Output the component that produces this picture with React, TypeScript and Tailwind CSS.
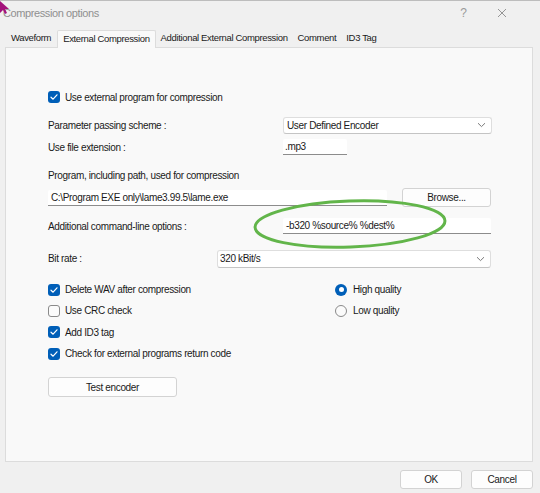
import React from "react";

const F = "font-['Liberation_Sans',Arial,sans-serif]";

function Check({ checked, label }: { checked: boolean; label: string }) {
  return (
    <div className="flex items-center h-[21.3px]">
      {checked ? (
        <div className="w-[12px] h-[12px] rounded-[3px] bg-[#005fb8] flex items-center justify-center">
          <svg width="8" height="8" viewBox="0 0 8 8">
            <path d="M1 4.2 L3.1 6.2 L7 1.8" fill="none" stroke="white" strokeWidth="1.2" strokeLinecap="round" strokeLinejoin="round" />
          </svg>
        </div>
      ) : (
        <div className="w-[12px] h-[12px] rounded-[3px] border border-[#8a8a8a] bg-[#fbfbfb]" />
      )}
      <span className="ml-[5px] text-[10px] tracking-[-0.35px] text-[#1a1a1a]">{label}</span>
    </div>
  );
}

function Radio({ checked, label }: { checked: boolean; label: string }) {
  return (
    <div className="flex items-center h-[21.3px]">
      {checked ? (
        <div className="w-[12px] h-[12px] rounded-full bg-[#005fb8] flex items-center justify-center">
          <div className="w-[5px] h-[5px] rounded-full bg-white" />
        </div>
      ) : (
        <div className="w-[12px] h-[12px] rounded-full border border-[#8a8a8a] bg-[#fbfbfb]" />
      )}
      <span className="ml-[6px] text-[10px] tracking-[-0.35px] text-[#1a1a1a]">{label}</span>
    </div>
  );
}

function Chevron() {
  return (
    <svg width="9" height="6" viewBox="0 0 9 6">
      <path d="M1 1.2 L4.5 4.6 L8 1.2" fill="none" stroke="#7a7a7a" strokeWidth="1" />
    </svg>
  );
}

export default function App() {
  return (
    <div className={`relative w-[540px] h-[493px] bg-[#f0f0f0] overflow-hidden border-t border-[#bdbdbd] ${F}`}>
      {/* cursor */}
      <svg className="absolute left-0 top-0" width="10" height="14" viewBox="0 0 10 14">
        <polygon points="0,0 0,12 3,9 5,13 7,12 5,8 9,8" fill="#a3127c" />
      </svg>

      {/* title bar */}
      <div className="h-[24px] flex items-center pl-[3px] pr-[33px]">
        <span className="text-[11px] tracking-[-0.4px] text-[#8f8f8f]">Compression options</span>
        <div className="flex-1" />
        <span className="text-[12px] text-[#9a9a9a] mr-[30px]">?</span>
        <svg width="10" height="10" viewBox="0 0 10 10">
          <path d="M1 1 L9 9 M9 1 L1 9" stroke="#8a8a8a" strokeWidth="0.9" />
        </svg>
      </div>

      {/* tabs */}
      <div className="flex items-end h-[22px] pl-[5px] text-[9.5px] tracking-[-0.35px] text-[#1a1a1a]">
        <div className="h-[17px] px-[6px] flex items-center">Waveform</div>
        <div className="h-[18px] px-[5px] flex items-center bg-[#f9f9f9] border border-b-0 border-[#dcdcdc] rounded-t-[2px] relative top-[1px] z-10">
          External Compression
        </div>
        <div className="h-[17px] px-[5px] flex items-center">Additional External Compression</div>
        <div className="h-[17px] px-[5px] flex items-center">Comment</div>
        <div className="h-[17px] px-[5px] flex items-center">ID3 Tag</div>
      </div>

      {/* panel */}
      <div className="relative ml-[5px] w-[528px] h-[415px] bg-[#f9f9f9] border border-[#dcdcdc] pl-[42px] pt-[42px] text-[10px] tracking-[-0.35px] text-[#1a1a1a]">
        <div className="h-[16px] flex items-center -mt-[1px]">
          <Check checked label="Use external program for compression" />
        </div>

        <div className="mt-[12px] h-[16px] flex items-center">
          <div className="w-[235px]">Parameter passing scheme :</div>
          <div className="w-[209px] h-[17px] bg-white border border-[#dedede] border-b-[#c4c4c4] rounded-[3px] flex items-center pl-[3px] pr-[5px]">
            <span className="flex-1">User Defined Encoder</span>
            <Chevron />
          </div>
        </div>

        <div className="mt-[6px] h-[16px] flex items-center">
          <div className="w-[235px]">Use file extension :</div>
          <div className="w-[64px] h-[16px] bg-white border-b border-[#8c8c8c] rounded-t-[2px] flex items-center pl-[2px]">.mp3</div>
        </div>

        <div className="mt-[13px] h-[14px] flex items-center">Program, including path, used for compression</div>

        <div className="mt-[6px] h-[19px] flex items-center">
          <div className="w-[339px] h-[16px] bg-white border-b border-[#8c8c8c] rounded-t-[2px] flex items-center pl-[3px]">
            C:\Program EXE only\lame3.99.5\lame.exe
          </div>
          <div className="ml-[15px] w-[89px] h-[19px] bg-[#fdfdfd] border border-[#d3d3d3] rounded-[3px] flex items-center justify-center">
            Browse...
          </div>
        </div>

        <div className="mt-[11px] h-[16px] flex items-center">
          <div className="w-[235px]">Additional command-line options :</div>
          <div className="w-[208px] h-[16px] bg-white border-b border-[#8c8c8c] rounded-t-[2px] flex items-center pl-[3px]">
            -b320 %source% %dest%
          </div>
        </div>

        <div className="mt-[16px] h-[17px] flex items-center">
          <div className="w-[169px]">Bit rate :</div>
          <div className="w-[274px] h-[18px] bg-white border border-[#dedede] border-b-[#c4c4c4] rounded-[3px] flex items-center pl-[2px] pr-[5px]">
            <span className="flex-1">320 kBit/s</span>
            <Chevron />
          </div>
        </div>

        <div className="mt-[12px] flex">
          <div className="w-[287px]">
            <Check checked label="Delete WAV after compression" />
            <Check checked={false} label="Use CRC check" />
            <Check checked label="Add ID3 tag" />
            <Check checked label="Check for external programs return code" />
          </div>
          <div>
            <Radio checked label="High quality" />
            <Radio checked={false} label="Low quality" />
          </div>
        </div>

        <div className="mt-[13px] w-[129px] h-[20px] bg-[#fdfdfd] border border-[#d3d3d3] rounded-[3px] flex items-center justify-center">
          Test encoder
        </div>
      </div>

      {/* bottom buttons */}
      <div className="flex justify-end gap-[9px] pr-[7px] mt-[8px] text-[10px] tracking-[-0.35px] text-[#1a1a1a]">
        <div className="w-[62px] h-[19px] bg-[#fdfdfd] border border-[#d3d3d3] rounded-[3px] flex items-center justify-center">OK</div>
        <div className="w-[62px] h-[19px] bg-[#fdfdfd] border border-[#d3d3d3] rounded-[3px] flex items-center justify-center">Cancel</div>
      </div>

      {/* green annotation ellipse */}
      <svg className="absolute left-[250px] top-[195px]" width="200" height="56" viewBox="0 0 200 56">
        <ellipse cx="100" cy="28" rx="95" ry="23" fill="none" stroke="#62b54a" strokeWidth="3" transform="rotate(-2 100 28)" />
      </svg>
    </div>
  );
}
